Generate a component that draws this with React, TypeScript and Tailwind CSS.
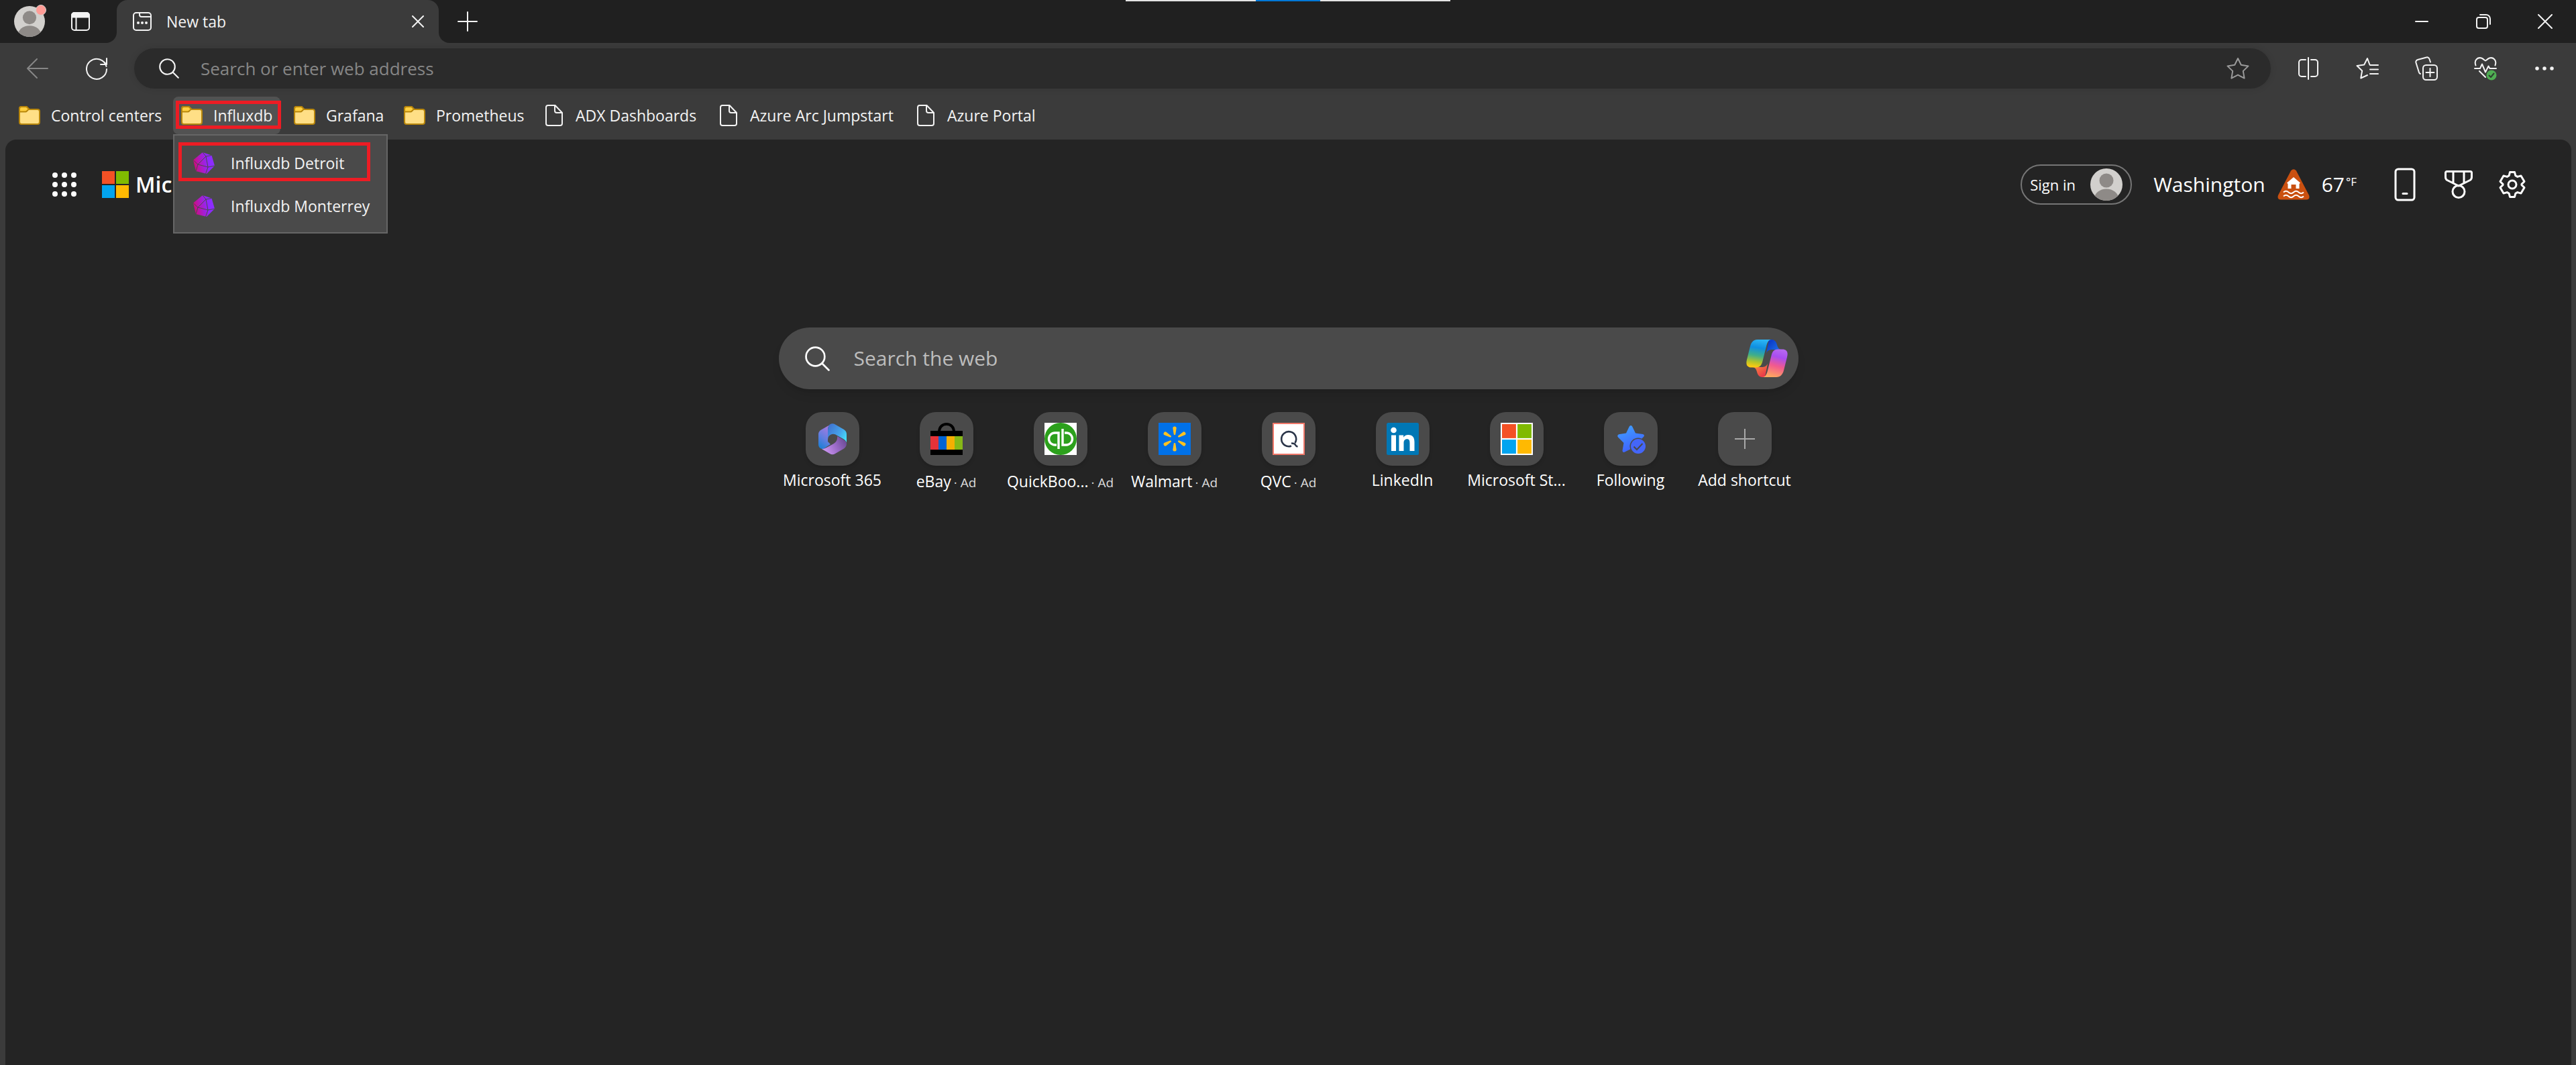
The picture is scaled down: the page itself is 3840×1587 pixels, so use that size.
import React from "react";

type SvgProps = { w: number; h: number; className?: string; children: React.ReactNode };

function Svg({ w, h, className, children }: SvgProps) {
  return (
    <svg
      width={w}
      height={h}
      viewBox={`0 0 ${w} ${h}`}
      fill="none"
      stroke="currentColor"
      strokeWidth={2}
      strokeLinecap="round"
      strokeLinejoin="round"
      aria-hidden="true"
      className={`shrink-0 ${className ?? ""}`}
    >
      {children}
    </svg>
  );
}

function Person({ size, id }: { size: number; id: string }) {
  return (
    <svg width={size} height={size} viewBox="0 0 48 48" aria-hidden="true" className="shrink-0">
      <clipPath id={id}>
        <circle cx="24" cy="24" r="24" />
      </clipPath>
      <g clipPath={`url(#${id})`}>
        <rect width="48" height="48" fill="#d2d0cd" />
        <circle cx="24" cy="18" r="10.5" fill="#8e8a87" />
        <ellipse cx="24" cy="45" rx="18" ry="14.5" fill="#8e8a87" />
      </g>
    </svg>
  );
}

function Folder() {
  return (
    <Svg w={32} h={28}>
      <path d="M1 9V4a3 3 0 0 1 3-3h7.500l4 4H28a3 3 0 0 1 3 3v16a3 3 0 0 1-3 3H4a3 3 0 0 1-3-3Z" fill="#ffdf86" stroke="#b8860b" />
      <path d="M1 8.500V4a3 3 0 0 1 3-3h7.500l3.500 3.500-3 3a3 3 0 0 1-2 1Z" fill="#ffcf3f" stroke="#b8860b" />
    </Svg>
  );
}

function PageIcon() {
  return (
    <Svg w={32} h={32}>
      <path d="M7 1h10.500L28 12v16a3 3 0 0 1-3 3H7a3 3 0 0 1-3-3V4a3 3 0 0 1 3-3Z" />
      <path d="M17 1.500V9a3 3 0 0 0 3 3h7.500" />
    </Svg>
  );
}

function InfluxIcon({ id }: { id: string }) {
  return (
    <svg width="32" height="32" viewBox="0 0 32 32" aria-hidden="true" className="shrink-0">
      <defs>
        <linearGradient id={id} x1="0" y1="0.600" x2="1" y2="0.400">
          <stop offset="0" stopColor="#d30971" />
          <stop offset="0.300" stopColor="#b318b8" />
          <stop offset="0.700" stopColor="#8f28ff" />
          <stop offset="1" stopColor="#8b30ff" />
        </linearGradient>
      </defs>
      <path d="M14 0 27.500 4.500 32 20 20 32 4 28 0 11.500Z" fill={`url(#${id})`} />
      <path d="M14 0 19 6 27.500 4.500M19 6 22 22 32 20M19 6 7 18 22 22 18.500 32M0 11.500 7 18 4 28" fill="none" stroke="#4a4a4a" strokeWidth="1" />
    </svg>
  );
}

function MsLogo({ size }: { size: number }) {
  return (
    <svg width={size} height={size} viewBox="0 0 40 40" aria-hidden="true" className="shrink-0">
      <path d="M0 0h19v19H0z" fill="#f45125" />
      <path d="M21 0h19v19H21z" fill="#80ba01" />
      <path d="M0 21h19v19H0z" fill="#02a4ef" />
      <path d="M21 21h19v19H21z" fill="#ffb902" />
    </svg>
  );
}

function SearchGlyph({ size }: { size: number }) {
  return (
    <svg width={size} height={size} viewBox="0 0 36 36" fill="none" stroke="currentColor" strokeWidth="2.600" strokeLinecap="round" aria-hidden="true" className="shrink-0">
      <circle cx="15" cy="15" r="13.500" />
      <path d="M24.500 24.500 34.500 34.500" />
    </svg>
  );
}

function Copilot() {
  return (
    <svg width="62" height="56" viewBox="0 0 62 56" aria-hidden="true">
      <defs>
        <linearGradient id="cpA" x1="0.550" y1="0" x2="0.400" y2="1">
          <stop offset="0" stopColor="#2bb5f5" />
          <stop offset="0.300" stopColor="#0f8fe0" />
          <stop offset="0.580" stopColor="#3fae8a" />
          <stop offset="0.820" stopColor="#b4c42a" />
          <stop offset="1" stopColor="#ffca10" />
        </linearGradient>
        <linearGradient id="cpB" x1="0.600" y1="0" x2="0.350" y2="1">
          <stop offset="0" stopColor="#b566f0" />
          <stop offset="0.250" stopColor="#a94df0" />
          <stop offset="0.580" stopColor="#f25a8e" />
          <stop offset="1" stopColor="#ffaa5e" />
        </linearGradient>
        <linearGradient id="cpC" x1="0" y1="0.200" x2="1" y2="1">
          <stop offset="0" stopColor="#0a34c4" />
          <stop offset="1" stopColor="#1f7cf0" />
        </linearGradient>
        <linearGradient id="cpD" x1="0" y1="0" x2="0.800" y2="1">
          <stop offset="0" stopColor="#ff9a3e" />
          <stop offset="1" stopColor="#e8304a" />
        </linearGradient>
      </defs>
      <path d="M34 0h4c5 0 7 4 8 8 1 4 3 7 7 7H39c-4 0-7 1-9 5Z" fill="url(#cpC)" />
      <path d="M28 56h-4c-5 0-7-4-8-8-1-4-3-7-7-7h14c4 0 7-1 9-5Z" fill="url(#cpD)" />
      <path d="M17 0h21c-4 0-6 3-7.500 8l-6 24c-1.500 6-4 9.500-9 9.500H8C2 41.500-1 38 1 30L6 10C7.500 4 11 0 17 0Z" fill="url(#cpA)" />
      <path d="M45 56H24c4 0 6-3 7.500-8l6-24c1.500-6 4-9.500 9-9.500H54c6 0 9 3.500 7 11.500l-5 20c-1.500 6-5 10-11 10Z" fill="url(#cpB)" />
    </svg>
  );
}

function M365() {
  return (
    <svg width="48" height="48" viewBox="0 0 48 48" aria-hidden="true">
      <defs>
        <linearGradient id="mA" x1="0.700" y1="0" x2="0.300" y2="1">
          <stop offset="0" stopColor="#b07ae0" />
          <stop offset="0.600" stopColor="#5f7ee0" />
          <stop offset="1" stopColor="#1f7fd6" />
        </linearGradient>
        <linearGradient id="mB" x1="0" y1="0.200" x2="1" y2="0.800">
          <stop offset="0" stopColor="#3f74d2" />
          <stop offset="0.600" stopColor="#46a4ea" />
          <stop offset="1" stopColor="#45e2fa" />
        </linearGradient>
        <linearGradient id="mC" x1="0" y1="0.700" x2="1" y2="0.300">
          <stop offset="0" stopColor="#d09af6" />
          <stop offset="0.550" stopColor="#9a6ac6" />
          <stop offset="1" stopColor="#6a4a94" />
        </linearGradient>
      </defs>
      <path d="M22 2 7 10.500Q3 13 3 17v15q0 4 3 6 3 2 6 0l9-6-4-4V10q0-6 5-8Z" fill="url(#mA)" />
      <path d="M20 2.500Q24 0 28 2.500L41 10q4 2.500 4 7v13q-1-4-5-6l-9-5q-4-3-8-2-6 2-6 8V11q0-6 3-8.500Z" fill="url(#mB)" />
      <path d="M31 20l9 5q5 3 5 6 0 5-4 7.500L28 46q-4 2.500-8 0L8 39q4 0 7-2l11-6q6-4 5-11Z" fill="url(#mC)" />
    </svg>
  );
}

function EBay() {
  return (
    <svg width="48" height="48" viewBox="0 0 48 48" aria-hidden="true">
      <path d="M13 14C13 6 18 2 24 2s11 4 11 12" fill="none" stroke="#000" strokeWidth="4" />
      <path d="M0 12h48v36H0z" fill="#000" />
      <path d="M0 20h12v20H0z" fill="#e53238" />
      <path d="M12 20h12v20H12z" fill="#0064d2" />
      <path d="M24 20h12v20H24z" fill="#f5af02" />
      <path d="M36 20h12v20H36z" fill="#86b817" />
    </svg>
  );
}

function QuickBooks() {
  return (
    <svg width="48" height="48" viewBox="0 0 48 48" aria-hidden="true" fill="none" stroke="#fff" strokeWidth="3.400">
      <path d="M0 0h48v48H0z" fill="#fff" stroke="none" />
      <circle cx="24" cy="24" r="24" fill="#2ca01c" stroke="none" />
      <path d="M18 33h-2.500a9 9 0 0 1 0-18H21v24" />
      <path d="M30 15h2.500a9 9 0 0 1 0 18H27V9" />
    </svg>
  );
}

function Walmart() {
  return (
    <svg width="48" height="48" viewBox="0 0 48 48" aria-hidden="true">
      <path d="M0 0h48v48H0z" fill="#0071e8" />
      {[0, 60, 120, 180, 240, 300].map((a) => (
        <path key={a} d="M22.800 17.500 21.300 8q0-2.500 2.700-2.500T26.700 8l-1.500 9.500q-1.200 1.200-2.400 0Z" fill="#ffc220" transform={`rotate(${a} 24 24)`} />
      ))}
    </svg>
  );
}

function Qvc() {
  return (
    <svg width="48" height="48" viewBox="0 0 48 48" aria-hidden="true" fill="none">
      <path d="M1 1h46v46H1z" fill="#fff" stroke="#f0786a" strokeWidth="2" />
      <path d="M28 34.500a11 11 0 1 1 5.500-4.500" stroke="#2a3448" strokeWidth="2.600" />
      <path d="M28 30.500q5 0 6 2.500 1 2 3.500 2.500" stroke="#2a3448" strokeWidth="2.600" />
    </svg>
  );
}

function LinkedIn() {
  return (
    <svg width="48" height="48" viewBox="0 0 48 48" aria-hidden="true">
      <rect width="48" height="48" rx="2.500" fill="#0077b5" />
      <circle cx="10.500" cy="11" r="4.300" fill="#fff" />
      <path d="M7 18.500h7V42H7z" fill="#fff" />
      <path d="M18.500 18.500h6.700v3.200c1.200-2.200 3.700-3.800 7-3.800 7 0 9.300 4.300 9.300 11V42h-7V30.200c0-3.500-.6-6-4-6-3.600 0-5 2.500-5 6V42h-7Z" fill="#fff" />
    </svg>
  );
}

function Store() {
  return (
    <span className="flex size-12 items-center justify-center bg-white">
      <MsLogo size={44} />
    </span>
  );
}

function Following() {
  return (
    <svg width="48" height="48" viewBox="0 0 48 48" aria-hidden="true">
      <defs>
        <linearGradient id="fwA" x1="0" y1="0" x2="0.400" y2="1">
          <stop offset="0" stopColor="#40a4ff" />
          <stop offset="1" stopColor="#3f62ff" />
        </linearGradient>
      </defs>
      <path d="M24 4q1.500 0 2.300 1.800l4.700 9.700 11 1.500q2 .5 2 2 0 1-1.500 2.500L35 29l-3 14-8-4-9.500 4.800q-3 .7-3-2.300L13.500 30 5 21.500Q3 19 6 17.200l11-1.700 4.700-9.700Q22.500 4 24 4Z" fill="url(#fwA)" />
      <circle cx="35" cy="35" r="12.500" fill="#4a4a4a" />
      <circle cx="35" cy="35" r="11" fill="#4466f8" />
      <path d="m28.500 35.500 4.500 4.500 8.500-9" fill="none" stroke="#4a4a4a" strokeWidth="2" />
    </svg>
  );
}

function AddGlyph() {
  return (
    <svg width="32" height="32" viewBox="0 0 32 32" fill="none" stroke="#a8a8a8" strokeWidth="2" aria-hidden="true">
      <path d="M16 1v30M1 16h30" />
    </svg>
  );
}

const bookmarks = [
  { label: "Control centers", kind: "folder", width: "w-[234px]" },
  { label: "Influxdb", kind: "folder", width: "w-[160px]" },
  { label: "Grafana", kind: "folder", width: "w-[156px]" },
  { label: "Prometheus", kind: "folder", width: "w-[200px]" },
  { label: "ADX Dashboards", kind: "page", width: "w-[252px]" },
  { label: "Azure Arc Jumpstart", kind: "page", width: "w-[286px]" },
  { label: "Azure Portal", kind: "page", width: "w-[208px]" },
];

const shortcuts = [
  { label: "Microsoft 365", icon: <M365 />, ad: false },
  { label: "eBay", icon: <EBay />, ad: true },
  { label: "QuickBoo...", icon: <QuickBooks />, ad: true },
  { label: "Walmart", icon: <Walmart />, ad: true },
  { label: "QVC", icon: <Qvc />, ad: true },
  { label: "LinkedIn", icon: <LinkedIn />, ad: false },
  { label: "Microsoft St...", icon: <Store />, ad: false },
  { label: "Following", icon: <Following />, ad: false },
];

function TitleBar() {
  return (
    <header className="relative flex h-16 items-center bg-[#202020]">
      <div className="absolute top-0 left-1/2 flex h-0.5 w-[484px] -translate-x-1/2 bg-[#e4e4e4]">
        <span className="mx-auto h-full w-24 bg-[#0078d7]" />
      </div>
      <button type="button" aria-label="Profile" className="relative ml-[21px]">
        <Person size={46} id="profile" />
        <span className="absolute -top-0.5 -right-0.5 size-4 rounded-full border border-[#d2d0cd] bg-[#ff9c96]" />
      </button>
      <button type="button" aria-label="Tab actions" className="ml-[39px]">
        <Svg w={28} h={28}>
          <rect x="1" y="1" width="26" height="26" rx="4" />
          <path d="M1 7.500V5a4 4 0 0 1 4-4h18a4 4 0 0 1 4 4v2.500Z" fill="currentColor" />
          <path d="M7.500 8v19" />
        </Svg>
      </button>
      <div className="relative ml-10 flex h-full w-[480px] items-center rounded-t-2xl bg-[#3b3b3b] pl-6">
        <span className="absolute bottom-0 -left-4 size-4 bg-[#3b3b3b]">
          <span className="block size-4 rounded-br-2xl bg-[#202020]" />
        </span>
        <span className="absolute -right-4 bottom-0 size-4 bg-[#3b3b3b]">
          <span className="block size-4 rounded-bl-2xl bg-[#202020]" />
        </span>
        <Svg w={28} h={28}>
          <rect x="1" y="1" width="26" height="26" rx="4" />
          <path d="M10 1v3a3 3 0 0 0 3 3h14" />
          <path d="M8 16h.01M14 16h.01M20 16h.01" strokeWidth={4} />
        </Svg>
        <span className="ml-5.5 flex-1 text-[23px] leading-8">New tab</span>
        <button type="button" aria-label="Close tab" className="mr-[22px]">
          <Svg w={18} h={18}>
            <path d="m1 1 16 16M17 1 1 17" />
          </Svg>
        </button>
      </div>
      <button type="button" aria-label="New tab" className="ml-7">
        <Svg w={30} h={30}>
          <path d="M15 1v28M1 15h28" />
        </Svg>
      </button>
      <div className="ml-auto flex h-full">
        <button type="button" aria-label="Minimize" className="flex w-[92px] items-center justify-center">
          <Svg w={20} h={20}>
            <path d="M1 10h18" />
          </Svg>
        </button>
        <button type="button" aria-label="Restore" className="flex w-[92px] items-center justify-center">
          <Svg w={22} h={22}>
            <rect x="1" y="5" width="16" height="16" rx="3" />
            <path d="M6 1h9a6 6 0 0 1 6 6v8" />
          </Svg>
        </button>
        <button type="button" aria-label="Close" className="flex w-[92px] items-center justify-center">
          <Svg w={22} h={22}>
            <path d="m1 1 20 20M21 1 1 21" />
          </Svg>
        </button>
      </div>
    </header>
  );
}

function ToolButton({ label, children }: { label: string; children: React.ReactNode }) {
  return (
    <button type="button" aria-label={label} className="flex h-15 w-[88px] shrink-0 items-center justify-center">
      {children}
    </button>
  );
}

function Toolbar() {
  return (
    <div className="flex items-center pt-2 pr-[3px] pb-3 pl-3">
      <ToolButton label="Back">
        <Svg w={32} h={30} className="text-[#868686]">
          <path d="M15 1 1 15l14 14M1 15h30" />
        </Svg>
      </ToolButton>
      <ToolButton label="Refresh">
        <Svg w={32} h={34}>
          <path d="M30.500 14A15 15 0 1 0 31 18M31 2v9h-9" />
          <path d="M30 11a15 15 0 0 0-1.500-2.500" />
        </Svg>
      </ToolButton>
      <form className="mr-3 ml-3 flex h-15 flex-1 items-center rounded-full bg-[#2b2b2b] pr-8 pl-[37px] shadow-[0_0_8px_2px_rgba(0,0,0,0.08)]">
        <SearchGlyph size={30} />
        <input aria-label="Address" placeholder="Search or enter web address" className="ml-8 flex-1 bg-transparent text-[26px] leading-9 outline-none placeholder:text-[#868686]" />
        <button type="button" aria-label="Add to favorites" className="text-[#9a9a9a]">
          <Svg w={34} h={32}>
            <path d="m17 1 4.800 9.800 10.700 1.600-7.700 7.500 1.800 10.700-9.600-5-9.600 5 1.800-10.700-7.700-7.500 10.700-1.600Z" />
          </Svg>
        </button>
      </form>
      <ToolButton label="Split screen">
        <Svg w={32} h={34}>
          <path d="M12 4H6a4 4 0 0 0-4 4v17a4 4 0 0 0 4 4h6M20 4h6a4 4 0 0 1 4 4v17a4 4 0 0 1-4 4h-6M16 1v32" />
        </Svg>
      </ToolButton>
      <ToolButton label="Favorites">
        <Svg w={34} h={34}>
          <path d="M20.500 11.500 17 2l-4.800 9.500L1.500 13l7.700 7.500-2 11L17 27M21 12h12M21 18.500h12M21 25h12" />
        </Svg>
      </ToolButton>
      <ToolButton label="Collections">
        <Svg w={34} h={36}>
          <rect x="12" y="13" width="21" height="22" rx="4.500" />
          <path d="M22.500 18v12M16.500 24h12M8 26a3 3 0 0 1-2-2L1.500 9.500A3.500 3.500 0 0 1 4 5l13-3.500A3.500 3.500 0 0 1 21.500 4L23 8.500" />
        </Svg>
      </ToolButton>
      <ToolButton label="Browser essentials">
        <Svg w={34} h={36}>
          <path d="M2.500 13.500C-.5 5 6 1 11 2.500c3 1 5 4 6 4s3-3 6-4c5-1.500 11.500 2.500 8.500 11M1 18h8l3-6.500 5 12 4.500-9 2 3.500H33M8 22l9 9" />
          <circle cx="26" cy="28" r="7.500" fill="#4fae53" stroke="none" />
          <path d="m22.500 28.500 2.500 2.500 4.500-5.500" stroke="#2f4030" />
        </Svg>
      </ToolButton>
      <ToolButton label="Settings and more">
        <Svg w={28} h={8}>
          <path d="M3 4h.01M14 4h.01M25 4h.01" strokeWidth={5.500} />
        </Svg>
      </ToolButton>
    </div>
  );
}

function FolderMenu() {
  return (
    <div className="absolute top-14 left-0 z-10 w-[320px] border-2 border-[#666666] bg-[#4a4a4a] px-[6px] pt-2.5 pb-3">
      <button type="button" className="flex h-[58px] w-[286px] items-center gap-6 border-[5px] border-[#ed1c24] pt-1 pl-[17px] text-left whitespace-nowrap">
        <InfluxIcon id="ifx1" />
        Influxdb Detroit
      </button>
      <button type="button" className="mt-1.5 flex h-[58px] w-full items-center gap-6 pt-1 pl-[22px] text-left whitespace-nowrap">
        <InfluxIcon id="ifx2" />
        Influxdb Monterrey
      </button>
    </div>
  );
}

function Bookmarks() {
  return (
    <nav aria-label="Favorites bar" className="flex gap-2 pb-2 pl-4 text-[23px] leading-8">
      {bookmarks.map((b) => {
        const open = b.label === "Influxdb";
        return (
          <div key={b.label} className={`relative shrink-0 ${b.width}`}>
            <button type="button" className={`flex h-14 w-full items-center gap-4 rounded-lg pl-3 text-left whitespace-nowrap ${open ? "bg-[#525252]" : ""}`}>
              {b.kind === "folder" ? <Folder /> : <PageIcon />}
              {b.label}
            </button>
            {open && <span className="pointer-events-none absolute top-1.5 left-1 h-[42px] w-[157px] border-[5px] border-[#ed1c24]" />}
            {open && <FolderMenu />}
          </div>
        );
      })}
    </nav>
  );
}

function PageHeader() {
  return (
    <div className="flex h-15 items-center">
      <button type="button" aria-label="App launcher" className="ml-[70px] grid grid-cols-3 gap-x-1.5 gap-y-1.5">
        {Array.from({ length: 9 }, (_, i) => (
          <span key={i} className="size-2 rounded-full bg-white" />
        ))}
      </button>
      <a href="#" className="ml-[38px] flex items-center gap-2.5 text-[32px] leading-10 font-semibold">
        <MsLogo size={40} />
        Microsoft
      </a>
      <button type="button" className="ml-auto flex h-15 w-[166px] items-center justify-between rounded-full border-2 border-[#767676] pr-3 pl-3 text-[22px] leading-8 whitespace-nowrap">
        Sign in
        <Person size={48} id="signin" />
      </button>
      <a href="#" className="ml-8 flex items-center text-[30px] leading-10">
        Washington
        <svg width="48" height="46" viewBox="0 0 48 46" aria-label="Flood warning" className="mx-4.5">
          <path d="M20 2.500Q24-2 28 2.500L47 39q2 6-4 6.500H5Q-1 45 1 39Z" fill="#ca5010" />
          <path d="m24 12 10 8.500-1.500 1.500V29h-5v-6h-7v6h-5v-7L14 20.500Z" fill="#fff" />
          <path d="M9 34.500q3.750-3.500 7.500 0t7.500 0 7.500 0 7.500 0M9 40.500q3.750-3.500 7.500 0t7.500 0 7.500 0 7.500 0" fill="none" stroke="#fff" strokeWidth="2" />
        </svg>
        67
        <span className="-mt-2 ml-0.5 text-[17px] leading-5">°F</span>
      </a>
      <button type="button" aria-label="Get the mobile app" className="ml-8 flex w-20 justify-center">
        <Svg w={32} h={50}>
          <g strokeWidth={3}>
            <rect x="2" y="2" width="28" height="46" rx="4" />
            <path d="M13 38.500h6" />
          </g>
        </Svg>
      </button>
      <button type="button" aria-label="Rewards" className="flex w-20 justify-center">
        <Svg w={42} h={42}>
          <g strokeWidth={3}>
            <path d="M3.500 1.500h35a2 2 0 0 1 2 2V10q0 3-2.500 4.500L21 23 4 14.500Q1.500 13 1.500 10V3.500a2 2 0 0 1 2-2ZM13 2v16M29 2v16" />
            <circle cx="21" cy="31.500" r="9" />
          </g>
        </Svg>
      </button>
      <button type="button" aria-label="Page settings" className="mr-12 flex w-20 justify-center">
        <Svg w={42} h={42}>
          <g strokeWidth={3}>
            <circle cx="21" cy="21" r="6" />
            <path d="M17.500 2.500h7l1.300 5.200 3 1.700 5.200-1.500 5 8.600-4 3.800v1.400l4 3.800-5 8.600-5.200-1.500-3 1.700-1.300 5.200h-7l-1.300-5.200-3-1.700L8 34.100l-5-8.600 4-3.800v-1.400l-4-3.800 5-8.600 5.200 1.500 3-1.700Z" />
          </g>
        </Svg>
      </button>
    </div>
  );
}

function Tile({ label, icon, ad }: { label: string; icon: React.ReactNode; ad: boolean }) {
  return (
    <>
      <span className="flex size-20 items-center justify-center rounded-3xl bg-[#4a4a4a] shadow-md">{icon}</span>
      <span className={`flex items-baseline gap-1 text-[23px] leading-8 whitespace-nowrap ${ad ? "mt-[7px]" : "mt-[5px]"}`}>
        {label}
        {ad && <span className="text-[19px] text-[#dcdcdc]">· Ad</span>}
      </span>
    </>
  );
}

export default function App() {
  return (
    <div className="flex min-h-screen flex-col bg-[#3b3b3b] font-['Open_Sans','Noto_Sans',sans-serif] text-[#f3f3f3]">
      <TitleBar />
      <Toolbar />
      <Bookmarks />
      <main className="mr-[7px] ml-2 flex-1 rounded-t-2xl bg-[#242424] pt-[37px] text-white">
        <PageHeader />
        <form className="mx-auto mt-[183px] flex h-[92px] w-full max-w-[1520px] items-center rounded-full bg-[#4a4a4a] pr-4 pl-[39px] shadow-lg">
          <SearchGlyph size={37} />
          <input aria-label="Search the web" placeholder="Search the web" className="ml-9 flex-1 bg-transparent text-[30px] leading-10 outline-none placeholder:text-[#bdbdbd]" />
          <button type="button" aria-label="Copilot">
            <Copilot />
          </button>
        </form>
        <div className="mx-auto mt-[34px] grid w-full max-w-[1530px] grid-cols-9">
          {shortcuts.map((s) => (
            <a key={s.label} href="#" className="flex flex-col items-center">
              <Tile {...s} />
            </a>
          ))}
          <button type="button" className="flex flex-col items-center">
            <Tile label="Add shortcut" icon={<AddGlyph />} ad={false} />
          </button>
        </div>
      </main>
    </div>
  );
}
